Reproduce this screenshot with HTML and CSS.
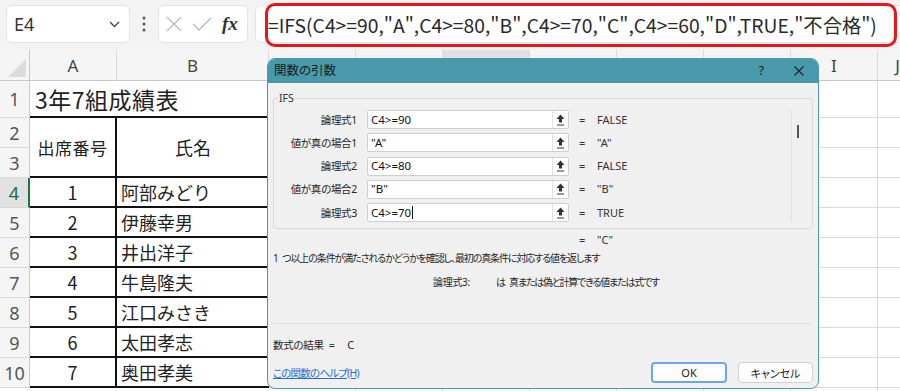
FILE: index.html
```html
<!DOCTYPE html>
<html lang="ja">
<head>
    <meta charset="UTF-8">
    <title>関数の引数 - IFS</title>
    <link rel="stylesheet" href="styles.css">
</head>
<body>
    <div class="toolbar">
        <div class="name-box">
            <span>E4</span>
            <svg width="11" height="7" viewBox="0 0 11 7"><polyline points="1,1 5.5,5.5 10,1" fill="none" stroke="#444" stroke-width="1.4"/></svg>
        </div>
        <div class="grip">
            <svg width="4" height="16" viewBox="0 0 4 16"><circle cx="2" cy="2" r="1.5"/><circle cx="2" cy="8" r="1.5"/><circle cx="2" cy="14" r="1.5"/></svg>
        </div>
        <div class="fn-box">
            <svg width="16" height="16" viewBox="0 0 16 16"><path d="M1 1 L15 15 M15 1 L1 15" stroke="#b9b9b9" stroke-width="1.3" fill="none"/></svg>
            <svg width="20" height="14" viewBox="0 0 20 14"><polyline points="1,7 7,13 19,1" stroke="#b9b9b9" stroke-width="1.3" fill="none"/></svg>
            <span class="fx">fx</span>
        </div>
        <div class="formula-box">
            <div class="formula-mark">=IFS(C4&gt;=90,"A",C4&gt;=80,"B",C4&gt;=70,"C",C4&gt;=60,"D",TRUE,"不合格")</div>
        </div>
    </div>

    <div class="sheet">
        <div class="corner"><span></span></div>
        <div class="col-head">A</div>
        <div class="col-head">B</div>
        <div class="col-head"></div>
        <div class="col-head"></div>
        <div class="col-head active"></div>
        <div class="col-head"></div>
        <div class="col-head"></div>
        <div class="col-head"></div>
        <div class="col-head">I</div>
        <div class="col-head">J</div>

        <div class="blank-top"></div>
        <div class="blank-rest"></div>

        <div class="row-head">1</div>
        <div class="title">3年7組成績表</div>

        <div class="row-head">2</div>
        <div class="head-a">出席番号</div>
        <div class="head-b">氏名</div>
        <div class="row-head">3</div>

        <div class="row-head active">4</div>
        <div class="num">1</div>
        <div class="name">阿部みどり</div>
        <div class="row-head">5</div>
        <div class="num">2</div>
        <div class="name">伊藤幸男</div>
        <div class="row-head">6</div>
        <div class="num">3</div>
        <div class="name">井出洋子</div>
        <div class="row-head">7</div>
        <div class="num">4</div>
        <div class="name">牛島隆夫</div>
        <div class="row-head">8</div>
        <div class="num">5</div>
        <div class="name">江口みさき</div>
        <div class="row-head">9</div>
        <div class="num">6</div>
        <div class="name">太田孝志</div>
        <div class="row-head">10</div>
        <div class="num">7</div>
        <div class="name">奥田孝美</div>
    </div>

    <div class="dialog">
        <div class="dialog-title">
            <span>関数の引数</span>
            <span class="help">?</span>
            <svg class="close" width="10" height="10" viewBox="0 0 10 10"><path d="M0.5 0.5 L9.5 9.5 M9.5 0.5 L0.5 9.5" stroke="#222" stroke-width="1.1" fill="none"/></svg>
        </div>
        <div class="dialog-body">
            <fieldset class="args">
                <legend>IFS</legend>
                <div class="arg-list">
                    <div class="arg-label">論理式1</div>
                    <div class="arg-input"><span class="arg-text">C4&gt;=90</span><span class="ref-btn"><svg width="9" height="12" viewBox="0 0 9 12"><path d="M4.5 0.5 L8.5 5 H6 V8.5 H3 V5 H0.5 Z" fill="#333"/><path d="M1 11 H8" stroke="#333" stroke-width="1"/></svg></span></div>
                    <div class="arg-value"><span class="eq">=</span>FALSE</div>

                    <div class="arg-label">値が真の場合1</div>
                    <div class="arg-input"><span class="arg-text">"A"</span><span class="ref-btn"><svg width="9" height="12" viewBox="0 0 9 12"><path d="M4.5 0.5 L8.5 5 H6 V8.5 H3 V5 H0.5 Z" fill="#333"/><path d="M1 11 H8" stroke="#333" stroke-width="1"/></svg></span></div>
                    <div class="arg-value"><span class="eq">=</span>"A"</div>

                    <div class="arg-label">論理式2</div>
                    <div class="arg-input"><span class="arg-text">C4&gt;=80</span><span class="ref-btn"><svg width="9" height="12" viewBox="0 0 9 12"><path d="M4.5 0.5 L8.5 5 H6 V8.5 H3 V5 H0.5 Z" fill="#333"/><path d="M1 11 H8" stroke="#333" stroke-width="1"/></svg></span></div>
                    <div class="arg-value"><span class="eq">=</span>FALSE</div>

                    <div class="arg-label">値が真の場合2</div>
                    <div class="arg-input"><span class="arg-text">"B"</span><span class="ref-btn"><svg width="9" height="12" viewBox="0 0 9 12"><path d="M4.5 0.5 L8.5 5 H6 V8.5 H3 V5 H0.5 Z" fill="#333"/><path d="M1 11 H8" stroke="#333" stroke-width="1"/></svg></span></div>
                    <div class="arg-value"><span class="eq">=</span>"B"</div>

                    <div class="arg-label">論理式3</div>
                    <div class="arg-input"><span class="arg-text">C4&gt;=70<span class="caret"></span></span><span class="ref-btn"><svg width="9" height="12" viewBox="0 0 9 12"><path d="M4.5 0.5 L8.5 5 H6 V8.5 H3 V5 H0.5 Z" fill="#333"/><path d="M1 11 H8" stroke="#333" stroke-width="1"/></svg></span></div>
                    <div class="arg-value"><span class="eq">=</span>TRUE</div>
                </div>
                <div class="scrollbar"><div class="thumb"></div></div>
            </fieldset>

            <div class="current-value"><span class="eq">=</span>"C"</div>
            <p class="desc">1 つ以上の条件が満たされるかどうかを確認し、最初の真条件に対応する値を返します</p>
            <p class="hint"><span class="hint-name">論理式3:</span><span class="hint-text">は 真または偽と計算できる値または式です</span></p>
            <div class="sep"></div>
            <div class="result">数式の結果<span class="result-eq">=</span><span class="result-value">C</span></div>

            <div class="dialog-footer">
                <a class="help-link" href="#">この関数のヘルプ(H)</a>
                <button class="btn btn-primary">OK</button>
                <button class="btn">キャンセル</button>
            </div>
        </div>
    </div>
</body>
</html>
```

FILE: styles.css
```css
body {
    margin: 0;
    width: 900px;
    height: 391px;
    overflow: hidden;
    position: relative;
    background: #fff;
    color: #222;
    font-family: "Noto Sans CJK JP", sans-serif;
}

/* formula bar */
.toolbar {
    display: flex;
    align-items: flex-start;
    height: 50px;
    box-sizing: border-box;
    padding-top: 5px;
    background: #f3f3f3;
}

.name-box {
    flex-shrink: 0;
    width: 124px;
    height: 38px;
    margin-left: 6px;
    box-sizing: border-box;
    display: flex;
    align-items: center;
    justify-content: space-between;
    padding: 0 9px 0 7px;
    background: #fff;
    border: 1px solid #e3e3e3;
    border-radius: 6px;
    font-family: "Noto Sans", sans-serif;
    font-size: 18px;
    color: #333;
}

.grip {
    flex-shrink: 0;
    width: 28px;
    height: 38px;
    display: flex;
    align-items: center;
    justify-content: center;
    fill: #555;
}

.fn-box {
    flex-shrink: 0;
    width: 90px;
    height: 38px;
    box-sizing: border-box;
    display: flex;
    align-items: center;
    gap: 10px;
    padding-left: 7px;
    background: #fff;
    border: 1px solid #e3e3e3;
    border-radius: 6px;
}

.fx {
    font-family: "Liberation Serif", serif;
    font-style: italic;
    font-weight: bold;
    font-size: 19px;
    color: #333;
}

.formula-box {
    flex: 1;
    min-width: 0;
    height: 38px;
    margin: 0 -12px 0 7px;
    box-sizing: border-box;
    display: flex;
    padding: 0 14px 0 9px;
    background: #fff;
    border: 1px solid #e3e3e3;
    border-radius: 6px;
}

.formula-mark {
    flex: 1;
    min-width: 0;
    margin: -3px 0 -5px;
    display: flex;
    align-items: center;
    border: 3px solid #e8151b;
    border-radius: 10px;
    font-family: "Liberation Sans Narrow", "Noto Sans CJK JP", sans-serif;
    font-size: 19.3px;
    color: #2a2a2a;
    white-space: nowrap;
}

/* worksheet */
.sheet {
    display: grid;
    grid-template-columns: 30px 87px 152px repeat(7, 87px) 40px;
    grid-template-rows: 31px 37px repeat(9, 30px) 10px;
    font-size: 18px;
}

.sheet > div {
    box-sizing: border-box;
}

.corner {
    display: flex;
    align-items: flex-end;
    justify-content: flex-end;
    padding: 0 3px 3px 0;
    background: #f5f5f5;
    border-right: 1px solid #c9c9c9;
    border-bottom: 1px solid #c9c9c9;
}

.corner span {
    width: 0;
    height: 0;
    border-left: 18px solid transparent;
    border-bottom: 18px solid #dcdcdc;
}

.col-head {
    display: flex;
    align-items: center;
    justify-content: center;
    background: #f5f5f5;
    border-right: 1px solid #dadada;
    border-bottom: 1px solid #c9c9c9;
    color: #444;
    font-family: "Noto Sans", sans-serif;
    font-size: 17px;
}

.col-head.active {
    background: #e1e1e1;
    border-bottom: 2px solid #217346;
}

.row-head {
    grid-column: 1;
    display: flex;
    align-items: center;
    justify-content: center;
    background: #f5f5f5;
    border-right: 1px solid #c9c9c9;
    border-bottom: 1px solid #dadada;
    color: #555;
    font-family: "Noto Sans", sans-serif;
    font-size: 18px;
}

.row-head.active {
    background: #e1e1e1;
    color: #1d6b40;
    border-right: 2px solid #217346;
}

.blank-top {
    grid-column: 4 / -1;
    grid-row: 2;
    border-bottom: 1px solid #dadada;
    background: repeating-linear-gradient(to right, transparent 0 86px, #dadada 86px 87px);
}

.blank-rest {
    grid-column: 4 / -1;
    grid-row: 3 / -1;
    background-image:
        repeating-linear-gradient(to right, transparent 0 86px, #dadada 86px 87px),
        repeating-linear-gradient(transparent 0 29px, #dadada 29px 30px);
}

.title {
    grid-column: 2 / span 2;
    display: flex;
    align-items: center;
    padding-left: 5px;
    border-bottom: 2px solid #111;
    font-size: 23px;
    letter-spacing: 0.5px;
}

.head-a,
.head-b,
.num {
    display: flex;
    align-items: center;
    justify-content: center;
    border-bottom: 2px solid #111;
}

.head-a {
    grid-column: 2;
    grid-row: span 2;
    border-right: 2px solid #111;
    font-size: 17px;
    letter-spacing: 0.5px;
}

.head-b {
    grid-column: 3;
    grid-row: span 2;
}

.num {
    grid-column: 2;
    border-right: 2px solid #111;
}

.name {
    grid-column: 3;
    display: flex;
    align-items: center;
    padding-left: 4px;
    border-bottom: 2px solid #111;
}

/* function arguments dialog */
.dialog {
    position: absolute;
    left: 267px;
    top: 58px;
    width: 552px;
    height: 331px;
    box-sizing: border-box;
    overflow: hidden;
    background: #f0f0f0;
    border: 1px solid #4b9aab;
    border-radius: 8px;
    font-family: "Noto Sans", "Noto Sans CJK JP", sans-serif;
    font-feature-settings: "palt";
    font-size: 10.5px;
    line-height: 14px;
    color: #262626;
}

.dialog-title {
    height: 24px;
    display: flex;
    align-items: center;
    padding-left: 6px;
    background: #4799ab;
    font-size: 12.5px;
    color: #1b1b1b;
}

.help {
    margin-left: auto;
    font-size: 12px;
}

.close {
    margin: 0 14px 0 30px;
}

.dialog-body {
    padding: 0 5px;
}

.args {
    margin: 7px 0 0;
    padding: 4px 0 0;
    height: 139px;
    box-sizing: border-box;
    min-width: 0;
    display: flex;
    align-items: flex-start;
    border: 1px solid #d9d9d9;
    border-radius: 3px;
}

.args legend {
    margin-left: 4px;
    padding: 0 1px;
    line-height: 16px;
    color: #333;
}

.arg-list {
    display: grid;
    grid-template-columns: 83px 202px auto;
    grid-auto-rows: 19px;
    column-gap: 10px;
    row-gap: 4.25px;
    align-items: center;
}

.arg-label {
    text-align: right;
    letter-spacing: -0.3px;
}

.arg-input {
    height: 19px;
    box-sizing: border-box;
    display: flex;
    background: #fff;
    border: 1px solid #cfcfcf;
    border-radius: 2px;
}

.arg-text {
    flex: 1;
    display: flex;
    align-items: center;
    padding-left: 3px;
    font-size: 11.5px;
    color: #111;
}

.caret {
    width: 1px;
    height: 13px;
    margin-left: 1px;
    background: #111;
}

.ref-btn {
    width: 15px;
    display: flex;
    align-items: center;
    justify-content: center;
    border-left: 1px solid #e2e2e2;
}

.arg-value,
.current-value {
    font-size: 11px;
    color: #333;
}

.eq {
    display: inline-block;
    width: 18px;
}

.scrollbar {
    margin-left: auto;
    width: 21px;
    height: 112px;
    box-sizing: border-box;
    padding: 15px 0 0 5px;
    border-left: 1px solid #e2e2e2;
}

.thumb {
    width: 2px;
    height: 13px;
    background: #555;
}

.current-value {
    margin-top: 4px;
    padding-left: 306px;
}

.desc {
    margin: 4px 0 0;
    font-size: 10px;
    letter-spacing: -1.1px;
    word-spacing: 3px;
}

.hint {
    margin: 10px 0 0;
    padding-left: 160px;
    font-size: 10px;
}

.hint-name {
    letter-spacing: -0.3px;
}

.hint-text {
    margin-left: 26px;
    letter-spacing: -1.2px;
    word-spacing: 3px;
}

.sep {
    height: 1px;
    margin-top: 34px;
    background: #e1e1e1;
}

.result {
    margin-top: 14px;
    letter-spacing: -0.3px;
}

.result-eq {
    margin-left: 5px;
}

.result-value {
    margin-left: 13px;
    font-size: 11px;
}

.dialog-footer {
    display: flex;
    align-items: center;
    margin-top: 10px;
}

.help-link {
    margin-right: auto;
    color: #1f6fd1;
    text-decoration: underline;
    letter-spacing: -0.8px;
}

.btn {
    width: 75px;
    height: 21px;
    box-sizing: border-box;
    margin-left: 11px;
    padding: 0;
    background: #fdfdfd;
    border: 1px solid #d0d0d0;
    border-radius: 4px;
    font-family: inherit;
    font-feature-settings: "palt";
    font-size: 11px;
    color: #222;
}

.btn-primary {
    width: 76px;
    margin-left: 0;
    border: 2px solid #6aa8e4;
}
```
